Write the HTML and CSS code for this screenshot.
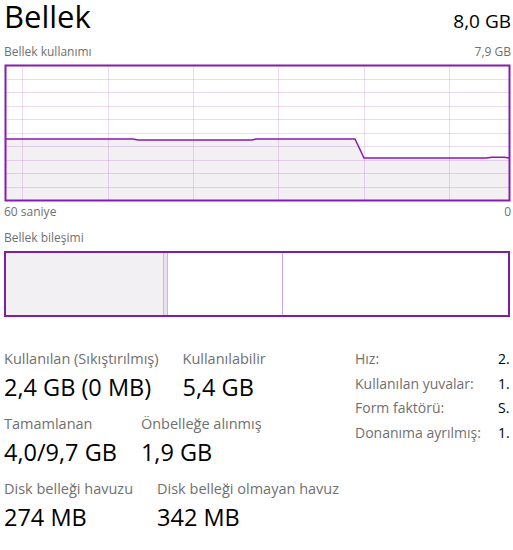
FILE: index.html
```html
<!DOCTYPE html>
<html lang="tr">
<head>
<meta charset="utf-8">
<title>Bellek</title>
<link rel="stylesheet" href="styles.css">
</head>
<body>
<div class="page">
  <div class="header">
    <div class="title">Bellek</div>
    <div class="total">8,0 GB</div>
  </div>
  <div class="subhead">
    <span>Bellek kullanımı</span>
    <span>7,9 GB</span>
  </div>
  <svg class="graph" width="507" height="138" viewBox="0 0 507 138" xmlns="http://www.w3.org/2000/svg">
    <polygon class="area" points="1.5,75 129,75 134,76 248,76 252,75 351,75 360,94 482,94 488,93.3 500,93.3 505.5,94 505.5,136.5 1.5,136.5"/>
    <g class="grid">
      <line x1="18.5" y1="1.5" x2="18.5" y2="136.5"/>
      <line x1="104.5" y1="1.5" x2="104.5" y2="136.5"/>
      <line x1="189.5" y1="1.5" x2="189.5" y2="136.5"/>
      <line x1="274.5" y1="1.5" x2="274.5" y2="136.5"/>
      <line x1="360.5" y1="1.5" x2="360.5" y2="136.5"/>
      <line x1="445.5" y1="1.5" x2="445.5" y2="136.5"/>
      <line x1="1.5" y1="15.5" x2="505.5" y2="15.5"/>
      <line x1="1.5" y1="28.5" x2="505.5" y2="28.5"/>
      <line x1="1.5" y1="42.5" x2="505.5" y2="42.5"/>
      <line x1="1.5" y1="55.5" x2="505.5" y2="55.5"/>
      <line x1="1.5" y1="69.5" x2="505.5" y2="69.5"/>
      <line x1="1.5" y1="82.5" x2="505.5" y2="82.5"/>
      <line x1="1.5" y1="96.5" x2="505.5" y2="96.5"/>
      <line x1="1.5" y1="109.5" x2="505.5" y2="109.5"/>
      <line x1="1.5" y1="123.5" x2="505.5" y2="123.5"/>
    </g>
    <polyline class="line" points="1.5,75 129,75 134,76 248,76 252,75 351,75 360,94 482,94 488,93.3 500,93.3 505.5,94"/>
    <rect class="frame" x="1.5" y="1.5" width="504" height="135"/>
  </svg>
  <div class="axis">
    <span>60 saniye</span>
    <span>0</span>
  </div>
  <div class="section-label">Bellek bileşimi</div>
  <div class="composition">
    <div class="seg inuse"></div>
    <div class="seg modified"></div>
    <div class="seg standby"></div>
    <div class="seg free"></div>
  </div>
  <div class="stats">
    <div class="stats-left">
      <div class="stat-row">
        <div class="stat">
          <div class="stat-label">Kullanılan (Sıkıştırılmış)</div>
          <div class="stat-value">2,4 GB (0 MB)</div>
        </div>
        <div class="stat">
          <div class="stat-label">Kullanılabilir</div>
          <div class="stat-value">5,4 GB</div>
        </div>
      </div>
      <div class="stat-row">
        <div class="stat">
          <div class="stat-label">Tamamlanan</div>
          <div class="stat-value">4,0/9,7 GB</div>
        </div>
        <div class="stat">
          <div class="stat-label">Önbelleğe alınmış</div>
          <div class="stat-value">1,9 GB</div>
        </div>
      </div>
      <div class="stat-row">
        <div class="stat">
          <div class="stat-label">Disk belleği havuzu</div>
          <div class="stat-value">274 MB</div>
        </div>
        <div class="stat">
          <div class="stat-label">Disk belleği olmayan havuz</div>
          <div class="stat-value">342 MB</div>
        </div>
      </div>
    </div>
    <div class="stats-right">
      <div class="info-row"><span class="info-label">Hız:</span><span class="info-value">2.</span></div>
      <div class="info-row"><span class="info-label">Kullanılan yuvalar:</span><span class="info-value">1.</span></div>
      <div class="info-row"><span class="info-label">Form faktörü:</span><span class="info-value">S.</span></div>
      <div class="info-row"><span class="info-label">Donanıma ayrılmış:</span><span class="info-value">1.</span></div>
    </div>
  </div>
</div>
</body>
</html>
```
FILE: styles.css
```css
html, body {
  margin: 0;
  padding: 0;
  background: #ffffff;
}
body {
  font-family: "Open Sans", "Noto Sans", sans-serif;
  color: #000000;
  width: 513px;
  height: 550px;
  overflow: hidden;
}
.page {
  padding: 0 2px 0 4px;
}
.header {
  display: flex;
  justify-content: space-between;
  align-items: baseline;
  height: 32px;
}
.title {
  font-size: 31px;
  line-height: 33px;
}
.total {
  font-size: 19px;
  line-height: 20px;
}
.subhead {
  margin-top: 12px;
  display: flex;
  justify-content: space-between;
  font-size: 12px;
  line-height: 16px;
  color: #707070;
}
.graph {
  display: block;
  margin-top: 4px;
}
.graph .area {
  fill: #f3f0f4;
}
.graph .grid line {
  stroke: rgba(139, 18, 174, 0.16);
  stroke-width: 1;
}
.graph .line {
  fill: none;
  stroke: #8b1aae;
  stroke-width: 1.5;
}
.graph .frame {
  fill: none;
  stroke: #8b1aae;
  stroke-width: 2;
}
.axis {
  margin-top: 2px;
  display: flex;
  justify-content: space-between;
  font-size: 12px;
  line-height: 16px;
  color: #707070;
}
.section-label {
  margin-top: 10px;
  font-size: 12px;
  line-height: 16px;
  color: #707070;
}
.composition {
  margin-top: 5px;
  margin-right: 1px;
  height: 62px;
  border: 2px solid #7d1ea3;
  display: flex;
}
.seg {
  height: 100%;
  box-sizing: border-box;
}
.inuse {
  width: 157px;
  background: #f3f0f4;
}
.modified {
  width: 5px;
  background: #ebe0f0;
  border-left: 1px solid #cfb4dc;
  border-right: 1px solid #cfb4dc;
}
.standby {
  width: 115px;
  border-right: 1px solid #d4a6e2;
}
.free {
  flex: 1;
}
.stats {
  margin-top: 30px;
  display: flex;
  justify-content: space-between;
  align-items: flex-start;
}
.stats-left {
  padding-top: 2px;
  display: flex;
  flex-direction: column;
  gap: 8px;
}
.stat-row {
  display: flex;
  gap: 24px;
}
.stat-label {
  font-size: 14.5px;
  line-height: 20px;
  color: #707070;
  white-space: nowrap;
}
.stat-value {
  font-size: 23.5px;
  line-height: 37px;
  white-space: nowrap;
}
.stats-right {
  width: 156px;
  display: flex;
  flex-direction: column;
}
.info-row {
  display: flex;
  font-size: 14px;
  line-height: 24.5px;
  white-space: nowrap;
}
.info-label {
  width: 143px;
  color: #707070;
}
.info-value {
  color: #000000;
}
```
